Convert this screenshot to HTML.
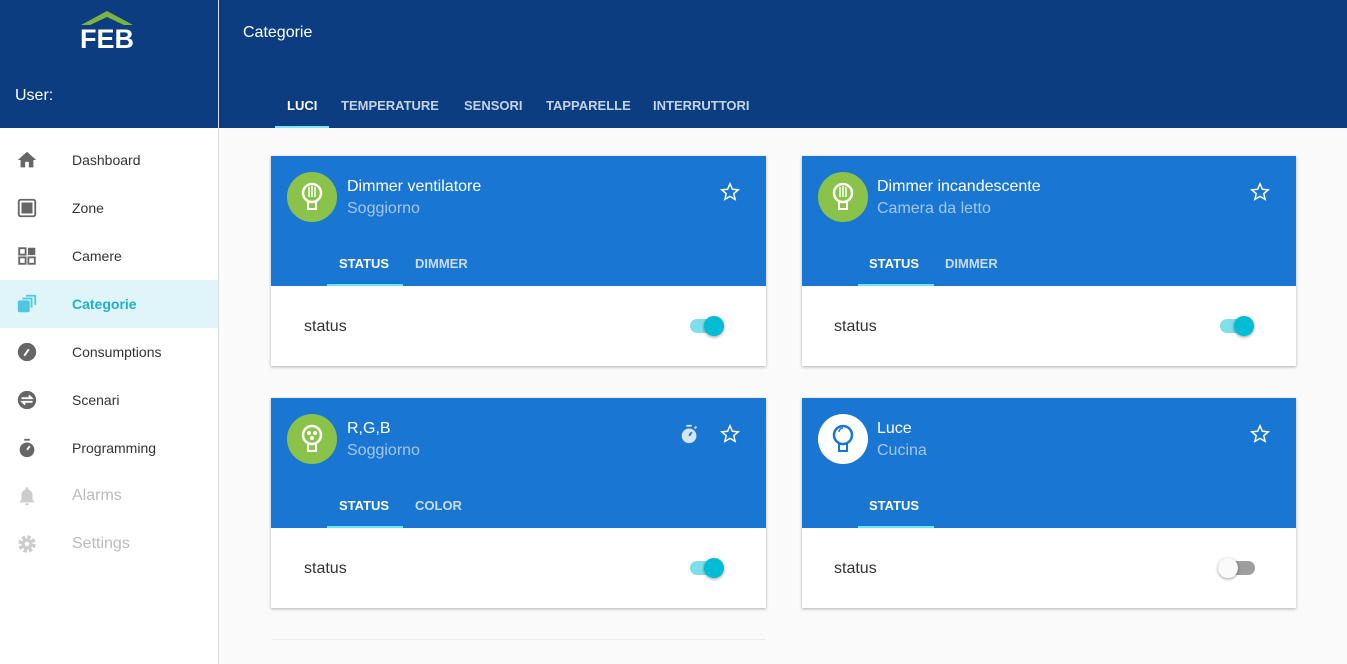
<!DOCTYPE html>
<html><head><meta charset="utf-8"><style>
*{margin:0;padding:0;box-sizing:border-box}
body{width:1347px;height:664px;overflow:hidden;font-family:"Liberation Sans",sans-serif;background:#fafafa;position:relative}
.abs{position:absolute}
#side{left:0;top:0;width:219px;height:664px;background:#fff;border-right:1px solid #ddd}
#sidetop{left:0;top:0;width:218px;height:128px;background:#0b3d80}
#top{left:219px;top:0;width:1128px;height:128px;background:#0b3d80}
.nav{position:absolute;left:0;width:218px;height:48px}
.nav span{position:absolute;left:72px;top:16px;font-size:14px;color:#333}
.nav svg{position:absolute;left:16px;top:13px}
.tt{position:absolute;top:98px;font-size:13px;font-weight:bold;color:#c5d3e8}
.card{position:absolute;width:495px;height:210px;background:#fff;box-shadow:0 1px 3px rgba(0,0,0,.3)}
.ch{position:absolute;left:0;top:0;width:100%;height:130px;background:#1976d2}
.av{position:absolute;left:16px;top:16px;width:50px;height:50px;border-radius:50%;background:#8bc34a}
.t1{position:absolute;left:76px;top:22px;font-size:16px;color:#fff}
.t2{position:absolute;left:76px;top:44px;font-size:16px;color:#a5c6ee}
.star{position:absolute;left:448px;top:25px}
.tab{position:absolute;top:100px;font-size:13px;font-weight:bold;color:#c9dcf5}
.ind{position:absolute;left:56px;top:128px;width:76px;height:2px;background:#6ee6f5}
.st{position:absolute;left:33px;top:162px;font-size:16px;color:#333}
.tr{position:absolute;left:419px;top:163px;width:34px;height:14px;border-radius:7px;background:#80deea}
.th{position:absolute;left:433px;top:160px;width:20px;height:20px;border-radius:50%;background:#00bcd4;box-shadow:0 1px 3px rgba(0,0,0,.4)}
</style></head><body>
<div id="side" class="abs"></div>
<div id="sidetop" class="abs">
<svg class="abs" style="left:79px;top:11px" width="56" height="40"><polygon points="28,0 54,14 45,14 28,6 11,14 2,14" fill="#7cb342"/><text x="28" y="37" text-anchor="middle" font-family="Liberation Sans" font-weight="bold" font-size="27" fill="#fff">FEB</text></svg>
<div class="abs" style="left:15px;top:87px;font-size:16px;color:#fff">User:</div>
</div>
<div id="top" class="abs">
<div class="abs" style="left:24px;top:24px;font-size:16px;color:#fff">Categorie</div>
<div class="tt" style="left:68px;color:#fff">LUCI</div>
<div class="tt" style="left:122px">TEMPERATURE</div>
<div class="tt" style="left:245px">SENSORI</div>
<div class="tt" style="left:327px">TAPPARELLE</div>
<div class="tt" style="left:434px">INTERRUTTORI</div>
<div class="abs" style="left:56px;top:126px;width:54px;height:2px;background:#7ee8f7"></div>
</div>

<div class="nav" style="top:136px"><svg width="22" height="22" viewBox="0 0 24 24"><path d="M10 20v-6h4v6h5v-8h3L12 3 2 12h3v8z" fill="#666"/></svg><span>Dashboard</span></div>
<div class="nav" style="top:184px"><svg width="22" height="22" viewBox="0 0 24 24"><rect x="3" y="3" width="18" height="18" rx="2" fill="none" stroke="#666" stroke-width="2"/><rect x="6" y="6" width="12" height="12" fill="#666"/></svg><span>Zone</span></div>
<div class="nav" style="top:232px"><svg width="22" height="22" viewBox="0 0 24 24"><rect x="3.5" y="3.5" width="7" height="7" fill="none" stroke="#666" stroke-width="2"/><rect x="13" y="3" width="8" height="8" fill="#666"/><rect x="3.5" y="13.5" width="7" height="7" fill="none" stroke="#666" stroke-width="2"/><rect x="13.5" y="13.5" width="7" height="7" fill="none" stroke="#666" stroke-width="2"/></svg><span>Camere</span></div>
<div class="nav" style="top:280px;background:#e0f5f9"><svg width="22" height="22" viewBox="0 0 24 24"><rect x="2" y="8" width="13" height="13" rx="2" fill="#4dc8e0"/><path d="M7 6h10v10M11 3h10v10" fill="none" stroke="#4dc8e0" stroke-width="2"/></svg><span style="color:#1ab2cc;font-weight:bold">Categorie</span></div>
<div class="nav" style="top:328px"><svg width="22" height="22" viewBox="0 0 24 24"><circle cx="12" cy="12" r="10" fill="#666"/><path d="M9 16l5-7" stroke="#fff" stroke-width="2"/></svg><span>Consumptions</span></div>
<div class="nav" style="top:376px"><svg width="22" height="22" viewBox="0 0 24 24"><circle cx="12" cy="12" r="10" fill="#666"/><path d="M6 10h11l-3-3M18 14H7l3 3" fill="none" stroke="#fff" stroke-width="2"/></svg><span>Scenari</span></div>
<div class="nav" style="top:424px"><svg width="22" height="22" viewBox="0 0 24 24"><circle cx="12" cy="14" r="8" fill="#666"/><rect x="9" y="2" width="6" height="2" fill="#666"/><path d="M12 14l3-4" stroke="#fff" stroke-width="2"/></svg><span>Programming</span></div>
<div class="nav" style="top:472px"><svg width="22" height="22" viewBox="0 0 24 24"><path d="M12 22a2 2 0 002-2h-4a2 2 0 002 2zm6-6v-5c0-3-2-5.5-4.5-6V4a1.5 1.5 0 00-3 0v1C8 5.5 6 8 6 11v5l-2 2v1h16v-1z" fill="#ccc"/></svg><span style="color:#bbb;font-size:16px;top:15px">Alarms</span></div>
<div class="nav" style="top:520px"><svg width="22" height="22" viewBox="0 0 24 24"><circle cx="12" cy="12" r="7" fill="none" stroke="#ccc" stroke-width="5" stroke-dasharray="3.5 2"/><circle cx="12" cy="12" r="6" fill="#ccc"/><circle cx="12" cy="12" r="2.5" fill="#fff"/></svg><span style="color:#bbb;font-size:16px;top:15px">Settings</span></div>

<div class="card" style="left:271px;top:156px"><div class="ch">
<div class="av"><svg width="50" height="50" viewBox="0 0 50 50"><circle cx="25" cy="21" r="9" fill="none" stroke="#fff" stroke-width="2.5"/><path d="M22 15v10M25 14v11M28 15v10" stroke="#fff" stroke-width="1.5"/><rect x="21" y="30" width="8" height="7" fill="none" stroke="#fff" stroke-width="2"/></svg></div>
<div class="t1">Dimmer ventilatore</div><div class="t2">Soggiorno</div>
<svg class="star" width="22" height="22" viewBox="0 0 24 24"><path d="M12 3l2.6 6 6.4.6-4.9 4.2 1.5 6.3L12 16.8 6.4 20.1l1.5-6.3L3 9.6l6.4-.6z" fill="none" stroke="#fff" stroke-width="1.6"/></svg>
<div class="tab" style="left:68px;color:#fff">STATUS</div><div class="tab" style="left:144px">DIMMER</div><div class="ind"></div></div>
<div class="st">status</div><div class="tr"></div><div class="th"></div></div>

<div class="card" style="left:802px;top:156px;width:494px"><div class="ch">
<div class="av"><svg width="50" height="50" viewBox="0 0 50 50"><circle cx="25" cy="21" r="9" fill="none" stroke="#fff" stroke-width="2.5"/><path d="M22 15v10M25 14v11M28 15v10" stroke="#fff" stroke-width="1.5"/><rect x="21" y="30" width="8" height="7" fill="none" stroke="#fff" stroke-width="2"/></svg></div>
<div class="t1" style="left:75px">Dimmer incandescente</div><div class="t2" style="left:75px">Camera da letto</div>
<svg class="star" width="22" height="22" viewBox="0 0 24 24" style="left:447px"><path d="M12 3l2.6 6 6.4.6-4.9 4.2 1.5 6.3L12 16.8 6.4 20.1l1.5-6.3L3 9.6l6.4-.6z" fill="none" stroke="#fff" stroke-width="1.6"/></svg>
<div class="tab" style="left:67px;color:#fff">STATUS</div><div class="tab" style="left:143px">DIMMER</div><div class="ind"></div></div>
<div class="st" style="left:32px">status</div><div class="tr" style="left:418px"></div><div class="th" style="left:432px"></div></div>

<div class="card" style="left:271px;top:398px"><div class="ch">
<div class="av"><svg width="50" height="50" viewBox="0 0 50 50"><circle cx="25" cy="21" r="9" fill="none" stroke="#fff" stroke-width="2.5"/><circle cx="22" cy="19" r="2" fill="#fff"/><circle cx="28" cy="19" r="2" fill="#fff"/><circle cx="25" cy="24" r="2" fill="#fff"/><rect x="21" y="30" width="8" height="7" fill="none" stroke="#fff" stroke-width="2"/></svg></div>
<div class="t1">R,G,B</div><div class="t2">Soggiorno</div>
<svg class="abs" style="left:408px;top:25px" width="22" height="22" viewBox="0 0 24 24"><circle cx="11" cy="14" r="8" fill="#d6e6f8"/><rect x="8" y="2" width="6" height="2" fill="#d6e6f8"/><path d="M17 6l2 -2" stroke="#d6e6f8" stroke-width="2"/><path d="M11 14l3-4" stroke="#1976d2" stroke-width="2"/></svg>
<svg class="star" width="22" height="22" viewBox="0 0 24 24"><path d="M12 3l2.6 6 6.4.6-4.9 4.2 1.5 6.3L12 16.8 6.4 20.1l1.5-6.3L3 9.6l6.4-.6z" fill="none" stroke="#fff" stroke-width="1.6"/></svg>
<div class="tab" style="left:68px;color:#fff">STATUS</div><div class="tab" style="left:144px">COLOR</div><div class="ind"></div></div>
<div class="st">status</div><div class="tr"></div><div class="th"></div></div>

<div class="card" style="left:802px;top:398px;width:494px"><div class="ch">
<div class="av" style="background:#fff"><svg width="50" height="50" viewBox="0 0 50 50"><circle cx="25" cy="21" r="9" fill="none" stroke="#1976d2" stroke-width="2.5"/><path d="M21 18a4 4 0 014-4" fill="none" stroke="#1976d2" stroke-width="1.5"/><rect x="21" y="30" width="8" height="7" fill="none" stroke="#1976d2" stroke-width="2"/></svg></div>
<div class="t1" style="left:75px">Luce</div><div class="t2" style="left:75px">Cucina</div>
<svg class="star" width="22" height="22" viewBox="0 0 24 24" style="left:447px"><path d="M12 3l2.6 6 6.4.6-4.9 4.2 1.5 6.3L12 16.8 6.4 20.1l1.5-6.3L3 9.6l6.4-.6z" fill="none" stroke="#fff" stroke-width="1.6"/></svg>
<div class="tab" style="left:67px;color:#fff">STATUS</div><div class="ind"></div></div>
<div class="st" style="left:32px">status</div><div class="tr" style="background:#9e9e9e;left:419px"></div><div class="th" style="left:416px;background:#fafafa"></div></div>

<div class="abs" style="left:271px;top:639px;width:495px;height:1px;background:#eee"></div>
</body></html>
